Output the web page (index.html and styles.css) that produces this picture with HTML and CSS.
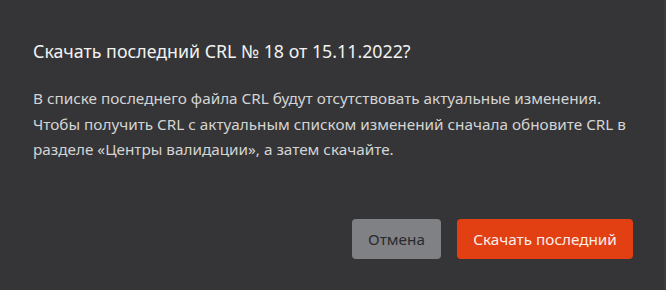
FILE: index.html
```html
<!DOCTYPE html>
<html lang="ru">
<head>
  <meta charset="UTF-8" />
  <title>Скачать CRL</title>
  <link rel="stylesheet" href="styles.css">
</head>
<body>
  <div class="dialog">
    <h2 class="dialog-title">Скачать последний CRL № 18 от 15.11.2022?</h2>
    <p class="dialog-text">
      В списке последнего файла CRL будут отсутствовать актуальные изменения.<br>
      Чтобы получить CRL с актуальным списком изменений сначала обновите CRL в<br>
      разделе «Центры валидации», а затем скачайте.
    </p>
    <div class="dialog-actions">
      <button class="btn btn-cancel">Отмена</button>
      <button class="btn btn-primary">Скачать последний</button>
    </div>
  </div>
</body>
</html>
```

FILE: styles.css
```css
html, body {
  margin: 0;
  padding: 0;
  background: #353537;
}
body {
  font-family: 'Noto Sans', 'DejaVu Sans', sans-serif;
}
.dialog {
  box-sizing: border-box;
  width: 666px;
  height: 290px;
  padding: 38px 31px 31px 33px;
  display: flex;
  flex-direction: column;
  background: #353537;
  border-right: 2px solid #3c3c3e;
}
.dialog-title {
  margin: 0;
  font-size: 17.8px;
  font-weight: normal;
  line-height: 26px;
  color: #f2f2f2;
}
.dialog-text {
  margin: 22px 0 0 0;
  font-size: 15.3px;
  line-height: 25.5px;
  color: #d4d4d4;
  white-space: nowrap;
}
.dialog-actions {
  margin-top: auto;
  display: flex;
  justify-content: flex-end;
  gap: 16px;
}
.btn {
  height: 40px;
  border: none;
  border-radius: 4px;
  font-family: inherit;
  font-size: 15.3px;
  padding: 0 12px;
  cursor: pointer;
}
.btn-cancel {
  width: 89px;
  background: #808185;
  color: #2a2a2c;
}
.btn-primary {
  width: 176px;
  background: #e23f12;
  color: #fbeee8;
}
```
